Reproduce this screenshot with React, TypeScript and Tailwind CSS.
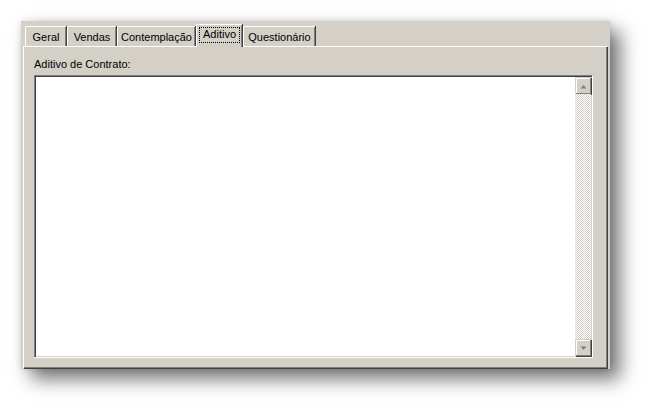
import React from "react";

const font = { fontFamily: '"Liberation Sans", Arial, sans-serif' };

function Tab({ label, w, selected }: { label: string; w: number; selected?: boolean }) {
  if (selected) {
    return (
      <div
        className="relative z-10 -mb-[1px] flex h-[23px] items-start justify-center border-l border-t border-white bg-[#d4d0c8] pt-[1px]"
        style={{ width: w, boxShadow: "inset -1px 0 0 #808080, 1px 0 0 #404040" }}
      >
        <span className="mt-[1px] border border-dotted border-black px-[3px] pb-[1px] leading-[13px]">{label}</span>
      </div>
    );
  }
  return (
    <div
      className="flex h-[20px] items-start justify-center rounded-tl-[2px] border-l border-t border-white bg-[#d4d0c8] pt-[4px] leading-[13px]"
      style={{ width: w, boxShadow: "inset -1px 0 0 #808080, 1px 0 0 #404040" }}
    >
      {label}
    </div>
  );
}

function Arrow({ up }: { up?: boolean }) {
  return (
    <div className="flex h-[17px] w-[16px] items-center justify-center border-l border-t border-[#d4d0c8] bg-[#d4d0c8] shadow-[inset_-1px_-1px_0_#808080,inset_1px_1px_0_#ffffff,1px_1px_0_#404040]">
      <svg width="7" height="5" viewBox="0 0 7 5">
        {up ? (
          <polygon points="0.5,4.5 3.5,1 6.5,4.5" fill="#808080" />
        ) : (
          <polygon points="0.5,0.5 3.5,4 6.5,0.5" fill="#808080" />
        )}
      </svg>
    </div>
  );
}

export default function App() {
  return (
    <div className="h-[411px] w-[651px] bg-white pl-[21px] pt-[21px] text-[11px] text-black" style={font}>
      <div className="flex h-[348px] w-[589px] flex-col bg-[#d4d0c8] pl-[2px] pr-[3px] pb-[1px] shadow-[10px_10px_18px_rgba(0,0,0,0.55),0_0_6px_rgba(0,0,0,0.12)]">
        <div className="flex h-[25px] items-end gap-[1px] pl-[2px]">
          <Tab label="Geral" w={41} />
          <Tab label="Vendas" w={49} />
          <Tab label="Contemplação" w={78} />
          <Tab label="Aditivo" w={46} selected />
          <Tab label="Questionário" w={72} />
        </div>
        <div className="flex flex-1 flex-col border-l border-t border-white bg-[#d4d0c8] pl-[10px] pr-[15px] pb-[11px] pt-[11px] shadow-[inset_-1px_-1px_0_#808080,1px_1px_0_#404040]">
          <div className="h-[17px] leading-[13px]">Aditivo de Contrato:</div>
          <div className="flex flex-1 border-l border-t border-[#808080] shadow-[1px_1px_0_#ffffff]">
            <div className="flex flex-1 border-l border-t border-[#404040] bg-white shadow-[inset_-1px_-1px_0_#d4d0c8]">
              <div className="flex-1" />
              <div className="mb-[1px] mr-[1px] flex w-[16px] flex-col">
                <Arrow up />
                <div className="flex-1 bg-[repeating-conic-gradient(#d4d0c8_0_25%,#ffffff_0_50%)] bg-[length:2px_2px]" />
                <Arrow />
              </div>
            </div>
          </div>
        </div>
      </div>
    </div>
  );
}
